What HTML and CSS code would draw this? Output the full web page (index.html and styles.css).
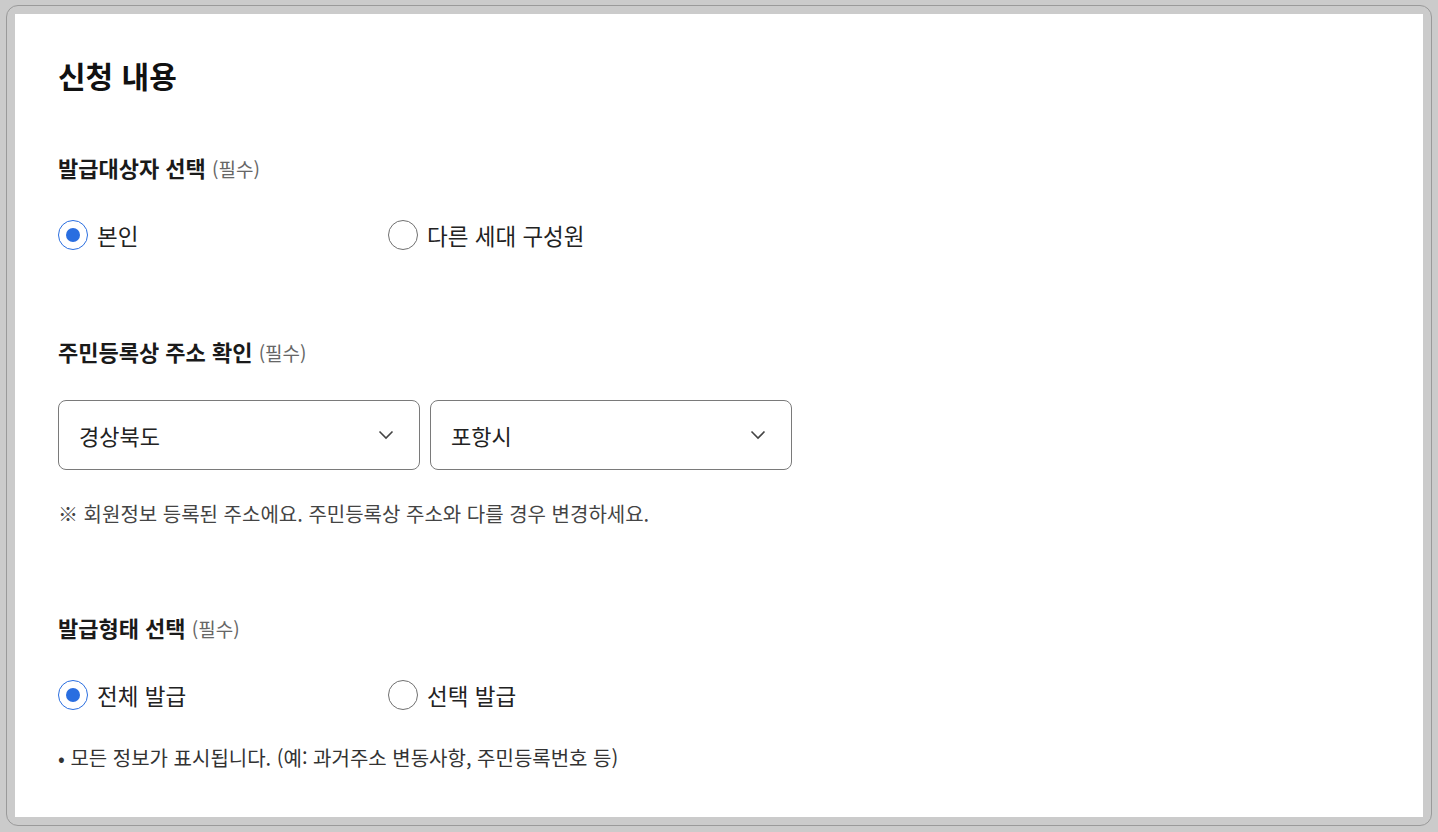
FILE: index.html
```html
<!DOCTYPE html>
<html lang="ko">
<head>
    <meta charset="UTF-8">
    <meta name="viewport" content="width=device-width, initial-scale=1.0">
    <title>신청 내용</title>
    <link rel="stylesheet" href="styles.css">
</head>
<body>

<div class="frame">
    <div class="panel">
        <h2>신청 내용</h2>

        <div class="section">
            <p class="field-label">발급대상자 선택 <span class="req">(필수)</span></p>
            <div class="radio-group">
                <label class="radio"><input type="radio" name="target" checked> 본인</label>
                <label class="radio"><input type="radio" name="target"> 다른 세대 구성원</label>
            </div>
        </div>

        <div class="section section-wide">
            <p class="field-label">주민등록상 주소 확인 <span class="req">(필수)</span></p>
            <div class="select-row">
                <div class="select-box">
                    <span>경상북도</span>
                    <svg width="16" height="10" viewBox="0 0 16 10"><polyline points="1.5,1.5 8,8 14.5,1.5" fill="none" stroke="#444" stroke-width="1.6"/></svg>
                </div>
                <div class="select-box">
                    <span>포항시</span>
                    <svg width="16" height="10" viewBox="0 0 16 10"><polyline points="1.5,1.5 8,8 14.5,1.5" fill="none" stroke="#444" stroke-width="1.6"/></svg>
                </div>
            </div>
            <p class="note">※ 회원정보 등록된 주소에요. 주민등록상 주소와 다를 경우 변경하세요.</p>
        </div>

        <div class="section section-last">
            <p class="field-label">발급형태 선택 <span class="req">(필수)</span></p>
            <div class="radio-group">
                <label class="radio"><input type="radio" name="type" checked> 전체 발급</label>
                <label class="radio"><input type="radio" name="type"> 선택 발급</label>
            </div>
            <p class="note bullet">• 모든 정보가 표시됩니다. (예: 과거주소 변동사항, 주민등록번호 등)</p>
        </div>
    </div>
</div>

</body>
</html>
```

FILE: styles.css
```css
body {
    font-family: "Noto Sans CJK KR", "Noto Sans", sans-serif;
    background-color: #cbcbcb;
    margin: 0;
    padding: 0;
}
.frame {
    margin: 5px 6px 0 6px;
    padding: 8px;
    border: 1px solid #9a9a9a;
    border-radius: 12px;
    box-sizing: border-box;
    height: 821px;
}
.panel {
    background-color: #fff;
    height: 100%;
    padding: 43px 43px 0 43px;
    box-sizing: border-box;
}
h2 {
    margin: 0;
    font-size: 30px;
    line-height: 36px;
    font-weight: 700;
    color: #111;
}
.section {
    margin-top: 60px;
}
.section-wide {
    margin-top: 87px;
}
.section-last {
    margin-top: 86px;
}
.field-label {
    margin: 0;
    font-size: 22px;
    line-height: 28px;
    font-weight: 700;
    color: #1a1a1a;
}
.req {
    font-size: 19px;
    font-weight: 400;
    color: #666;
}
.radio-group {
    display: flex;
    margin-top: 37px;
}
.radio {
    display: flex;
    align-items: center;
    gap: 9px;
    width: 330px;
    height: 30px;
    font-size: 22.5px;
    color: #222;
    cursor: pointer;
}
.radio input {
    appearance: none;
    -webkit-appearance: none;
    margin: 0;
    width: 30px;
    height: 30px;
    border: 1px solid #707070;
    border-radius: 50%;
    box-sizing: border-box;
    display: flex;
    align-items: center;
    justify-content: center;
}
.radio input:checked {
    border: 1.5px solid #2a6ee0;
}
.radio input:checked::after {
    content: "";
    width: 14px;
    height: 14px;
    border-radius: 50%;
    background-color: #2a6ee0;
}
.select-row {
    display: flex;
    gap: 10px;
    margin-top: 33px;
}
.select-box {
    width: 362px;
    height: 70px;
    border: 1px solid #7a7a7a;
    border-radius: 8px;
    box-sizing: border-box;
    display: flex;
    align-items: center;
    justify-content: space-between;
    padding: 0 25px 0 20px;
    font-size: 22px;
    color: #222;
}
.note {
    margin: 31px 0 0 0;
    font-size: 20px;
    line-height: 26px;
    color: #444;
}
.bullet {
    margin-top: 35px;
    color: #333;
}
```
